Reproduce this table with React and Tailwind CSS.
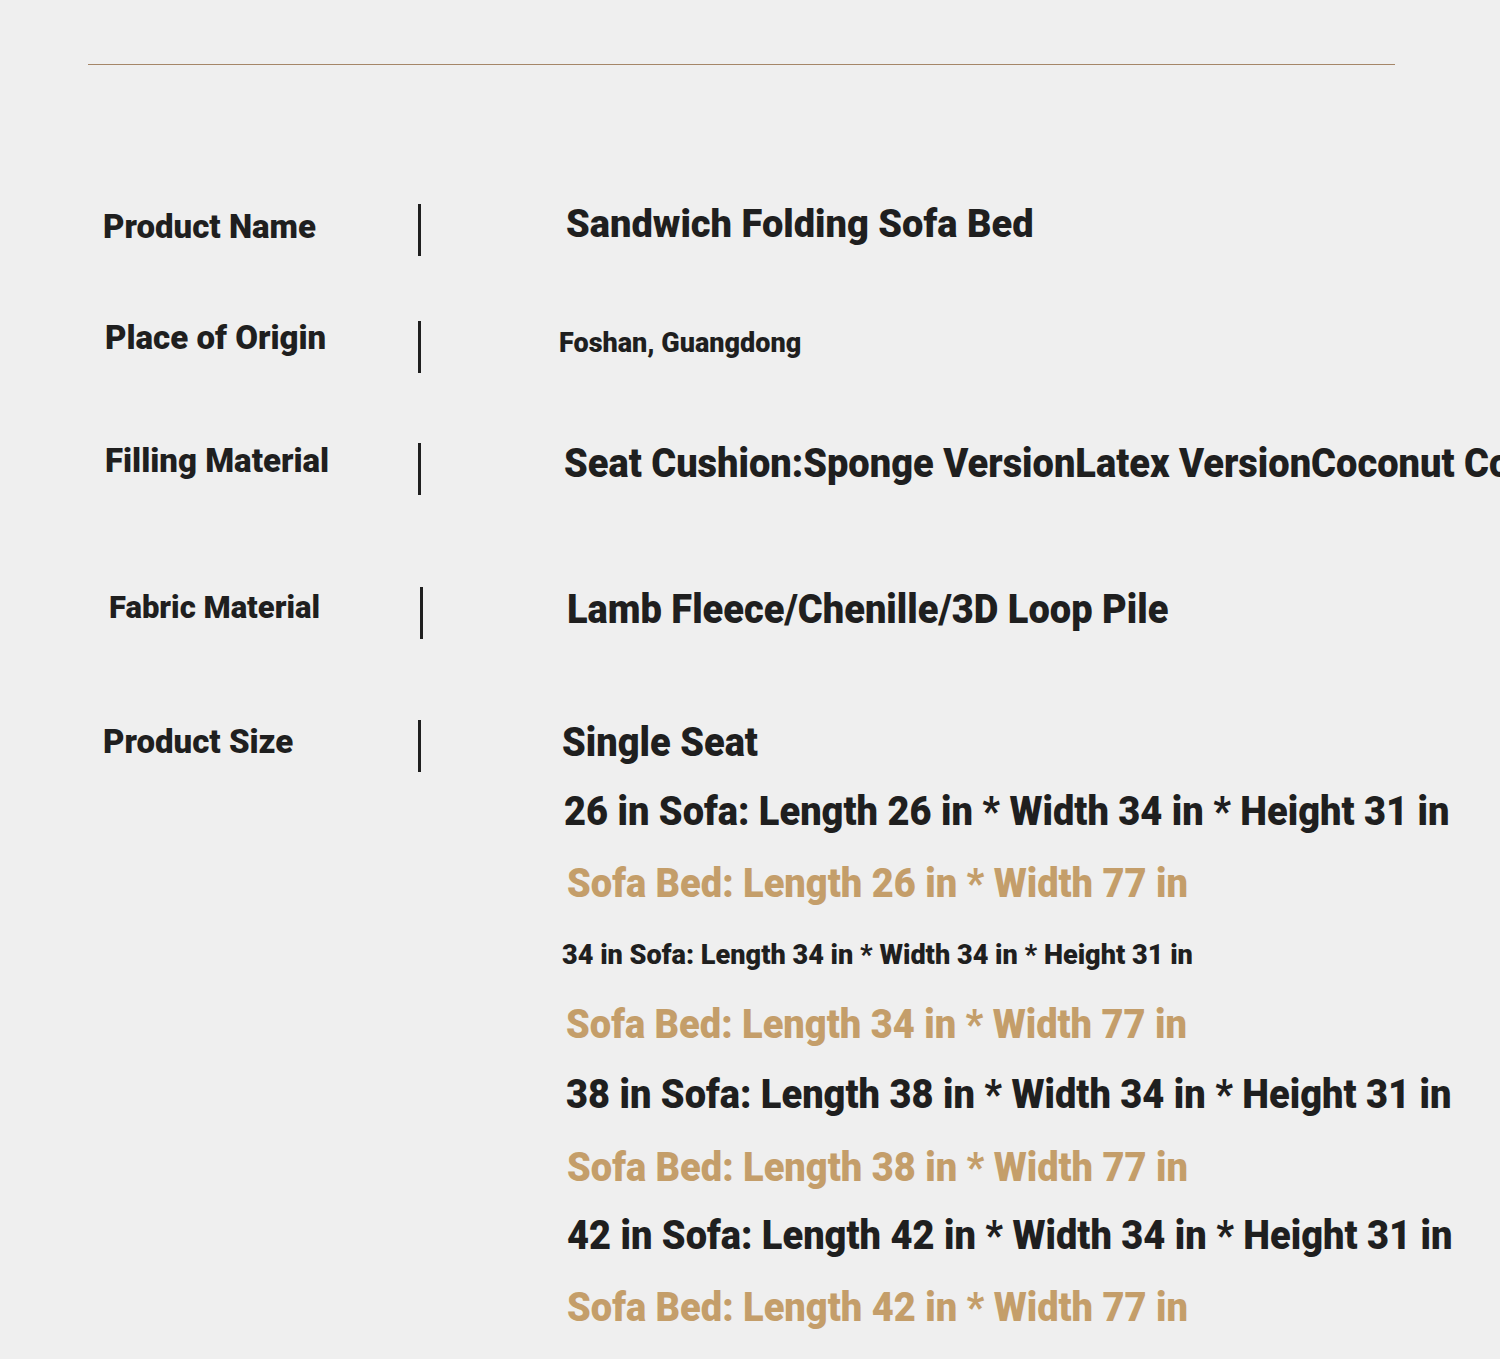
import React from 'react';

const rows = [
  {
    label: 'Product Name',
    labelCls: 'pl-[15px] text-[33px] -mt-[2px]',
    rowCls: 'mt-[134px]',
    barCls: 'mt-[5px]',
    value: 'Sandwich Folding Sofa Bed',
    valueCls: 'ml-[145px] text-[38px] -mt-[5px]',
    condensed: false,
  },
  {
    label: 'Place of Origin',
    labelCls: 'pl-[17px] text-[33px] -mt-[8px]',
    rowCls: 'mt-[57px]',
    barCls: 'mt-[5px]',
    value: 'Foshan, Guangdong',
    valueCls: 'ml-[138px] text-[27px] -mt-[3px]',
    condensed: false,
  },
  {
    label: 'Filling Material',
    labelCls: 'pl-[17px] text-[33px] -mt-[6px]',
    rowCls: 'mt-[61px]',
    barCls: 'mt-[6px]',
    value: 'Seat Cushion:Sponge VersionLatex VersionCoconut Coir Version',
    valueCls: 'ml-[143px] text-[40px] -mt-[3px]',
    condensed: true,
  },
  {
    label: 'Fabric Material',
    labelCls: 'pl-[21px] text-[31px] -mt-[4px]',
    rowCls: 'mt-[85px]',
    barCls: 'mt-[5px] ml-[2px]',
    value: 'Lamb Fleece/Chenille/3D Loop Pile',
    valueCls: 'ml-[144px] text-[40px] -mt-[2px]',
    condensed: true,
  },
];

const sizeLines = [
  { text: 'Single Seat', cls: 'h-[69px] pl-[0px] text-[40px] text-[#1f1f1f]' },
  { text: '26 in Sofa: Length 26 in * Width 34 in * Height 31 in', cls: 'h-[72px] pl-[2px] text-[40px] text-[#1f1f1f]' },
  { text: 'Sofa Bed: Length 26 in * Width 77 in', cls: 'h-[71px] pl-[5px] text-[40px] text-[#c49e6a]' },
  { text: '34 in Sofa: Length 34 in * Width 34 in * Height 31 in', cls: 'h-[70px] pl-0 text-[28.5px] text-[#1f1f1f]' },
  { text: 'Sofa Bed: Length 34 in * Width 77 in', cls: 'h-[70px] pl-[4px] text-[40px] text-[#c49e6a]' },
  { text: '38 in Sofa: Length 38 in * Width 34 in * Height 31 in', cls: 'h-[73px] pl-[4px] text-[40px] text-[#1f1f1f]' },
  { text: 'Sofa Bed: Length 38 in * Width 77 in', cls: 'h-[68px] pl-[5px] text-[40px] text-[#c49e6a]' },
  { text: '42 in Sofa: Length 42 in * Width 34 in * Height 31 in', cls: 'h-[72px] pl-[5px] text-[40px] text-[#1f1f1f]' },
  { text: 'Sofa Bed: Length 42 in * Width 77 in', cls: 'h-[60px] pl-[5px] text-[40px] text-[#c49e6a]' },
];

function Bar({ className = '' }) {
  return <div className={`w-[3px] h-[52px] bg-[#1f1f1f] shrink-0 ${className}`} />;
}

export default function App() {
  return (
    <div
      className="w-[1500px] h-[1359px] overflow-hidden bg-[#efefef] text-[#1f1f1f]"
      style={{ fontFamily: 'Roboto, "Liberation Sans", sans-serif' }}
    >
      <div className="pt-[64px] pl-[88px]">
        <div className="w-[1307px] h-px bg-[#a58668]" />

        {rows.map((r) => (
          <div key={r.label} className={`flex items-start h-[60px] ${r.rowCls}`}>
            <div className={`w-[330px] shrink-0 h-[60px] flex items-center font-black whitespace-nowrap ${r.labelCls}`}>
              {r.label}
            </div>
            <Bar className={r.barCls} />
            <div className={`h-[60px] flex items-center font-black whitespace-nowrap ${r.valueCls}`}>
              <span className={r.condensed ? 'inline-block origin-left scale-x-[0.95]' : ''}>{r.value}</span>
            </div>
          </div>
        ))}

        <div className="flex items-start mt-[71px]">
          <div className="w-[330px] shrink-0 h-[60px] flex items-center pl-[15px] text-[33px] font-black whitespace-nowrap -mt-[1px]">
            Product Size
          </div>
          <Bar className="mt-[7px]" />
          <div className="ml-[141px] flex flex-col">
            {sizeLines.map((l, i) => (
              <div key={i} className={`flex items-start font-black whitespace-nowrap ${l.cls}`}>
                <span className="block h-[60px] leading-[60px] origin-left scale-x-[0.95]">{l.text}</span>
              </div>
            ))}
          </div>
        </div>
      </div>
    </div>
  );
}
